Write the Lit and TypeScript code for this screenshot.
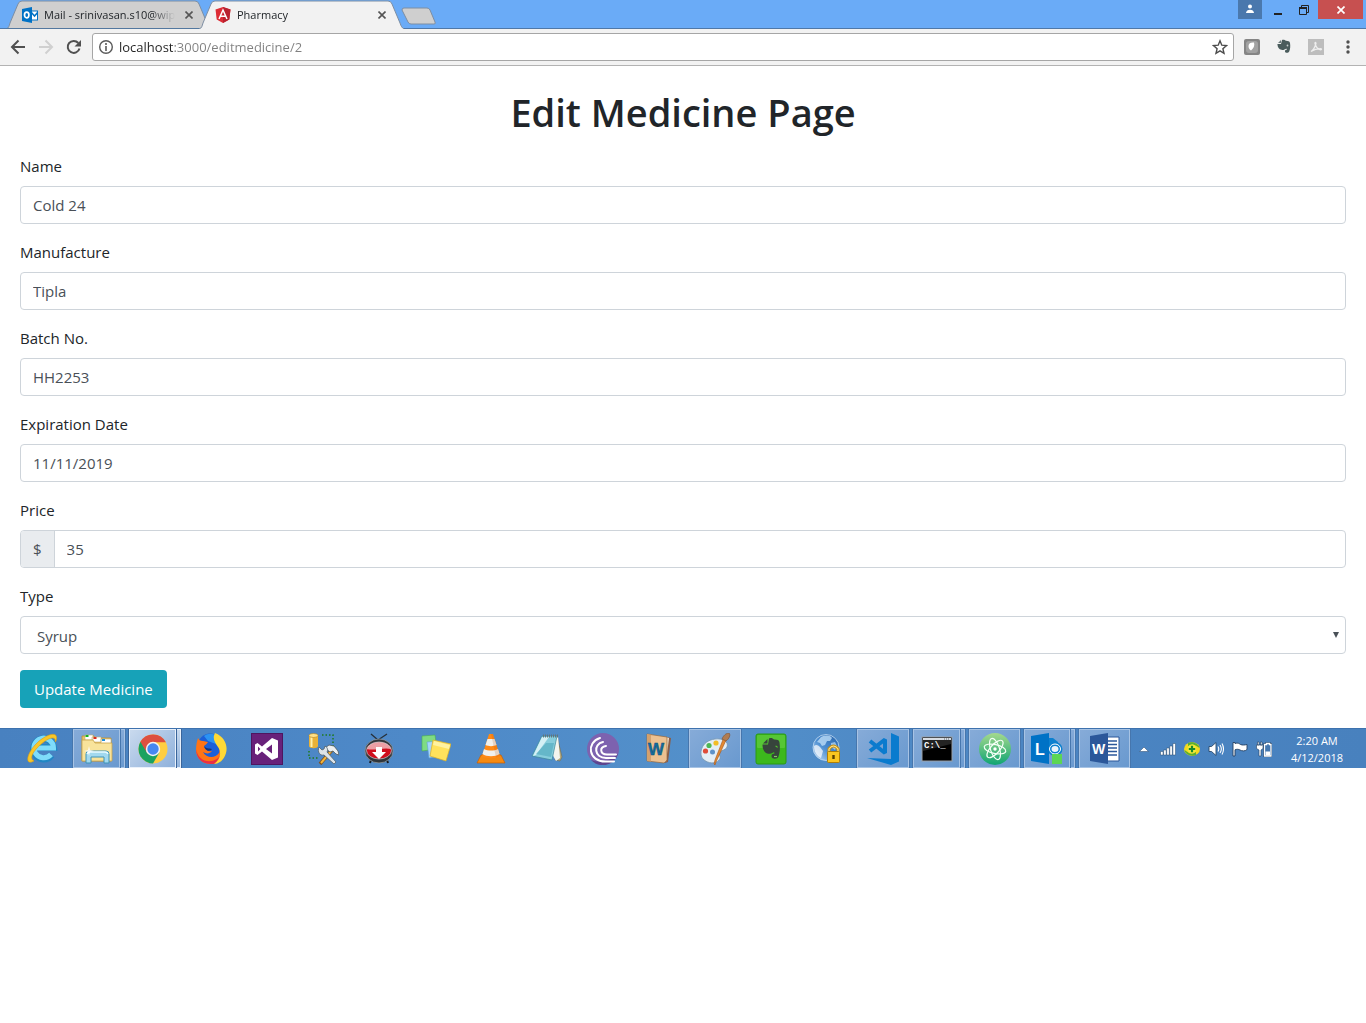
import { LitElement, html, svg, css, nothing } from "lit";
import type { SVGTemplateResult } from "lit";
import { customElement, property, state } from "lit/decorators.js";
import { classMap } from "lit/directives/class-map.js";

/* ---------- Shared styles ---------- */

const base = css`
  :host,
  *,
  *::before,
  *::after {
    box-sizing: border-box;
  }
  button {
    font: inherit;
    color: inherit;
    margin: 0;
    padding: 0;
    border: 0;
    background: none;
  }
  svg {
    display: block;
    flex: none;
  }
`;

const icon = (size: number, art: SVGTemplateResult) =>
  html`<svg width=${size} height=${size} viewBox="0 0 ${size} ${size}" aria-hidden="true">${art}</svg>`;

/* ---------- Browser artwork, 16 x 16 ---------- */

const outlook = svg`
  <rect x="9" y="4" width="6.500" height="9" fill="#fff" stroke="#0072c6"/>
  <path d="M9 5l3.500 4L16 5" fill="none" stroke="#0072c6" stroke-width="1.500"/>
  <path d="M0 2l10-2v16L0 14z" fill="#0072c6"/>
  <ellipse cx="4.700" cy="8" rx="2.200" ry="2.800" fill="none" stroke="#fff" stroke-width="1.700"/>`;

const angular = svg`
  <path d="M8 0l7.500 2.600-1.200 9.900L8 16l-6.300-3.500L.5 2.600z" fill="#dd2c35"/>
  <path d="M8 0l7.500 2.600-1.200 9.900L8 16z" fill="#b9222f"/>
  <path d="M4 12L8 3l4 9M5.500 9.300h5" fill="none" stroke="#fff" stroke-width="1.500"/>`;

const back = svg`<path d="M15 8H2.500M8.500 1.500L2 8l6.500 6.500" fill="none" stroke="#505050" stroke-width="2"/>`;
const forward = svg`<path d="M1 8h12.500M7.500 1.500L14 8l-6.500 6.500" fill="none" stroke="#d0d0d0" stroke-width="2"/>`;
const reload = svg`
  <path d="M13.500 9.500A6 6 0 1 1 12.300 4" fill="none" stroke="#505050" stroke-width="2"/>
  <path d="M15 1v6.500H8.500z" fill="#505050"/>`;
const info = svg`
  <circle cx="8" cy="8" r="6.300" fill="none" stroke="#5a5a5a" stroke-width="1.400"/>
  <path d="M8 7v5M8 4v2" stroke="#5a5a5a" stroke-width="1.600"/>`;
const star = svg`<path d="M8 1.800l1.800 4.400 4.700.4-3.600 3.100 1.100 4.600L8 11.900l-4 2.400 1.100-4.600-3.600-3.100 4.700-.4z" fill="none" stroke="#4c4c4c" stroke-width="1.400"/>`;
const shieldExtension = svg`
  <rect width="16" height="16" rx="2" fill="#858585"/>
  <rect x="2" y="2" width="12" height="12" rx="3" fill="#a2a2a2"/>
  <path d="M4.500 7c0-3 3-4 5.500-3.500C11 6.500 9.500 9.500 7 11.500 5.500 10.500 4.500 9 4.500 7z" fill="#fff"/>`;
const elephantExtension = svg`
  <path d="M6 1c2-.5 3 .4 4 .8 2 .2 3.700.3 4 2.200.5 3 .3 6-.8 8.500-.6 1.600-3.700 1.800-4.200.2-.2-1.200.5-2 1.600-1.900.6-.6.200-1.300-.6-1.100-1.500.6-2.500 1.800-4.500 1.100C3 10.500 1.500 8 1.400 5H5z" fill="#4a5c5c"/>
  <path d="M5 1v3H2z" fill="#6c7c7c"/>
  <circle cx="11.500" cy="6.500" r=".9" fill="#c5cccc"/>`;
const pdfExtension = svg`
  <rect width="16" height="16" fill="#bdbdbd"/>
  <path d="M3 12.500c2-1 4-4.500 5-8 .2-1.400-1.400-1.400-1 0 .8 3.400 3 5.700 5.700 6.300 1.200 0 1-1.200-.2-1.200-3 0-6.700 1-9.500 2.900z" fill="none" stroke="#eee" stroke-width="1.200"/>`;
const dots = svg`<circle cx="8" cy="3" r="1.700" fill="#505050"/><circle cx="8" cy="8" r="1.700" fill="#505050"/><circle cx="8" cy="13" r="1.700" fill="#505050"/>`;

/* ---------- Task bar artwork, 32 x 32 ---------- */

const explorerE = svg`
  <path d="M24.500 22a10 10 0 1 1 2-7.500H9" fill="none" stroke="#2287c4" stroke-width="7"/>
  <path d="M24 21.500a9.800 9.800 0 1 1 2.500-6.500H9" fill="none" stroke="#7fdcfa" stroke-width="5"/>
  <path d="M7 28C-2 33-1 22 8 12S31-3 29.500 6c-.2 1.400-.6 2.200-1.200 3 .6-6-5.300-5-12.800 1S1 25 7 28z" fill="#f9c728" stroke="#d89d18" stroke-width=".6"/>`;

const folder = svg`
  <path d="M1 3h12l1 2h16v23H1z" fill="#e8c469" stroke="#b98f36" stroke-width=".8"/>
  <path d="M4 2h8v5H4zM11 4h9v5h-9zM20 6h10v5H20z" fill="#fff" stroke="#c8b06c" stroke-width=".6"/>
  <path d="M4.500 2h3v2h-3z" fill="#16b31c"/><path d="M12.500 4h3v2h-3z" fill="#d92b1c"/><path d="M21 6h3v2h-3z" fill="#1b8fe0"/>
  <path d="M1 7h11l2 3h17v18H1z" fill="#f8e39b" stroke="#c8a34c" stroke-width=".8"/>
  <path d="M5 30V21q0-3 3-3h17q3 0 3 3v9h-5v-6H10v6z" fill="#a2d9ef" stroke="#3f94b8"/>
  <path d="M6 21q1-2 3-2h15q2 0 3 2" fill="none" stroke="#e9fbff" stroke-width="1.500"/>
  <path d="M8 13l1 4 4 1-4 1-1 4-1-4-4-1 4-1z" fill="#fff" opacity=".8"/>`;

const chrome = svg`
  <circle cx="16" cy="16" r="14.500" fill="#ffce42"/>
  <path d="M16 16L3.400 8.800A14.500 14.500 0 0 0 16 30.500l6.300-10.900z" fill="#1aa260"/>
  <path d="M16 9.300h12.900A14.500 14.500 0 0 0 3.400 8.800l6.400 10.800z" fill="#dd4f40"/>
  <circle cx="16" cy="16" r="7.200" fill="#f3f3f3"/><circle cx="16" cy="16" r="5.700" fill="#4688f1"/>`;

const firefox = svg`
  <circle cx="15" cy="12.500" r="12" fill="#1b5fd8"/>
  <path d="M9 3c4-3 10-3 13 1l-1 7-8-3z" fill="#2b93f2"/>
  <path d="M3 5c1 2 2 3 5 3 2 0 3 1 5 1-1 2-3 3-4 4 1 4 4 6 8 5-2 3-6 3-9 1 3 6 12 7 16 1 2-4 0-8-1-11 5 2 8 8 7 12-2 7-8 10-14 10C7 31 1 25 1 17 1 12 2 8 3 5z" fill="#ff7415"/>
  <path d="M1.200 16c1 9 8 13 15 12 5-.5 9-4 11-9l3 1c-2 8-8 11-14 11C7 31 1 25 1.200 16z" fill="#ea2f45"/>
  <path d="M20 0c10 4 13 13 11 20-2 7-7 11-12 11 6-4 8-11 4-17-3-5-6-8-3-14z" fill="#ffd936"/>
  <path d="M9 13c2 3 5 2 8 3-2 3-7 2-8-3z" fill="#12347b"/>`;

const visualStudio = svg`
  <rect width="32" height="32" fill="#68217a"/><rect x=".5" y=".5" width="31" height="31" fill="none" stroke="#4e1560"/>
  <path fill-rule="evenodd" d="M21 5l6 2.500v17L21 27l-10-8.500L6.500 22 4 20.500v-9L6.500 10l4.500 3.500zM21 11.500L15 16l6 4.500zM7 13.500v5L9.300 16z" fill="#fff"/>`;

const databaseTools = svg`
  <path d="M2 2v11c0 3 9 3 9 0V2z" fill="#e9b238"/><path d="M3.500 3v11h2V3z" fill="#fff1ac"/><ellipse cx="6.500" cy="2.500" rx="4.500" ry="2" fill="#ffe188" stroke="#b27e18" stroke-width=".6"/>
  <path d="M15 2h11v11M2 18v7h10" fill="none" stroke="#1f7a1c" stroke-width="1.500" stroke-dasharray="1.500 2"/>
  <path d="M25 17L13 31" stroke="#845018" stroke-width="3.500"/><path d="M25 17L14 30" stroke="#f4b63c" stroke-width="2"/>
  <path d="M18 15l4-3 5 1 4 5 1 4-3-1-3-3-3 1z" fill="#eceff1" stroke="#4d5960" stroke-width=".8"/>
  <path d="M12 14l3 3 2-1 1-3c3 2 3 4 2 6l9 10-2 2-10-9c-4 1-7-3-5-8z" fill="#dce3e8" stroke="#52616b" stroke-width=".8"/>`;

const downloader = svg`
  <path d="M8 1l7 6 9-6" fill="none" stroke="#273039" stroke-width="1.300"/>
  <path d="M8 27l-1 3M24 27l1 3" stroke="#15191d" stroke-width="2"/>
  <ellipse cx="16" cy="18" rx="14" ry="12" fill="#30363b" stroke="#8e979d" stroke-width=".8"/>
  <ellipse cx="16" cy="17.500" rx="12.500" ry="8.500" fill="#cf0f1d" stroke="#b9bec2" stroke-width=".8"/>
  <path d="M4 16c2-9 22-9 24 0-7-2-17 2-24 0z" fill="#fff" opacity=".6"/>
  <path d="M13 14h6v5h4l-7 7-7-7h4z" fill="#fff"/>`;

const stickyNotes = svg`
  <path d="M3 3l13-1 2 14-15 2z" fill="#7edb83" stroke="#4aae50" stroke-width=".6"/>
  <path d="M8 9l13-1 1 15-12 2z" fill="#a4d6fb" stroke="#5ea1d6" stroke-width=".6"/>
  <path d="M14 7l18 4-5 17-16-5z" fill="#ffe25c" stroke="#d9ad28" stroke-width=".7"/>
  <path d="M15 8l16 4-1 4-16-4z" fill="#fff2a0"/>`;

const vlc = svg`
  <path d="M6 22h20l4 8H2z" fill="#f58a12" stroke="#c75b00" stroke-width=".7"/>
  <path d="M14 1h4l7 22c-3 3-15 3-18 0z" fill="#ff8a17"/>
  <path d="M12.500 6h7l2 6c-3 1.500-8 1.500-11 0zM9 16c4 2 10 2 14 0l1.500 5c-4 3-13 3-17 0z" fill="#f0f0ed"/>
  <path d="M16 1h2l7 22-4 1.500z" fill="#b94c00" opacity=".18"/>`;

const notepad = svg`
  <path d="M26 3l5 21-2 4-5-1z" fill="#b6aa7d" stroke="#6c6a56" stroke-width=".6"/>
  <path d="M11 3h16l2 22-4 3z" fill="#f4f5ee"/>
  <path d="M11 3h15l-5 24-20-4z" fill="#87cddc" stroke="#3b8798" stroke-width=".7"/>
  <path d="M11 4h7L5 22l-3 1z" fill="#d4f0f5"/><path d="M15 10h8l-3 14-15-3z" fill="#4ea9bc" opacity=".6"/>
  <path d="M12 3h15" stroke="#65747b" stroke-width="3" stroke-dasharray="1 1"/>`;

const torrent = svg`
  <circle cx="16" cy="16" r="16" fill="#7d62af"/><path d="M4 27a16 16 0 0 0 27-6C22 29 12 30 4 27z" fill="#5e448e"/>
  <g fill="none" stroke="#fff" stroke-width="2" stroke-linecap="round">
    <path d="M13 5C-1 9 1 29 19 28.500h8"/><path d="M16 9C6 11 7 25 19 25h9"/><path d="M19 13c-7 1-6 8.500 1 8.500h9"/>
  </g>`;

const wordWeb = svg`
  <path d="M24 4l4 1-3 24-3 1z" fill="#8b5e48"/><path d="M23 4l3 1-3 24-2-1z" fill="#f4e5cc"/>
  <path d="M4 1l20 3v23l-3 3-17-2z" fill="#ecc191" stroke="#95673c" stroke-width=".7"/><path d="M4 1l4 .7V28.500L4 28z" fill="#d4a16d"/>
  <text x="5" y="22" font-family="Liberation Sans, sans-serif" font-size="17" font-weight="700" fill="#146d9e" stroke="#0c5077" stroke-width=".5">W</text>`;

const paint = svg`
  <path d="M16 6c8-1 14 3 12 8-1 3-5 3-7 5-2 3 2 5-1 8-3 4-11 4-16-1C0 22 1 8 16 6z" fill="#e4eef6" stroke="#7595b0" stroke-width=".8"/>
  <circle cx="6.500" cy="18" r="2.600" fill="#df4c39"/><circle cx="10" cy="12.500" r="2.600" fill="#4db653"/><circle cx="17" cy="10" r="2.600" fill="#f2bd28"/><circle cx="13.500" cy="19" r="2.500" fill="#5f92c8"/>
  <path d="M28 5L17 29l-1 3-1-1 1-4L25 4z" fill="#e38932" stroke="#a45519" stroke-width=".6"/>
  <path d="M23 6c1-3 4-6 7-6 2 2 0 6-3 8z" fill="#b07c52" stroke="#7a5034" stroke-width=".6"/>`;

const evernote = svg`
  <rect x="1" y="1" width="30" height="30" rx="2" fill="#3cb81d" stroke="#2a9a14"/><rect x="2" y="2" width="28" height="13" rx="1" fill="#64ce42" opacity=".65"/>
  <path d="M14 5.500c2-1 4 0 5 1 3 .2 5 0 5.500 3 .8 5 .4 10-1 14-1 3-6.500 3-7 0-.2-2 1-3 2.600-2.700.8-.8.300-1.800-.8-1.400-2 .6-3.500 2-6 1.200C8.500 19 7.500 15 7.500 11.500H13z" fill="#37443c"/>
  <path d="M12.500 6v4.500H8z" fill="#37443c"/><path d="M20 13c2-1 3 .3 2.500 2z" fill="#50c72c"/><path d="M19 23.500h3" stroke="#7dd05e" stroke-width="1.200"/>`;

const globeLock = svg`
  <defs><linearGradient id="globeBlue" x1="1" y1="0" x2="0" y2="1"><stop stop-color="#2460a8"/><stop offset=".55" stop-color="#4f90d2"/><stop offset="1" stop-color="#cfe4f7"/></linearGradient></defs>
  <circle cx="15" cy="14.500" r="13" fill="url(#globeBlue)" stroke="#c4dcf2" stroke-width=".8"/>
  <path d="M10 4c4-2 9-2 11 1l-2 3h-3l-2 4-3 1-2-3-3-1z" fill="#bcdcf6" opacity=".8"/>
  <path d="M20 10l4-1 2 4-2 4-4-3z" fill="#bcdcf6" opacity=".7"/>
  <path d="M3 13c2-2 4-1 6 1l3 4-2 7c-4-2-7-6-7-12z" fill="#fff" opacity=".7"/>
  <path d="M18 20v-4q4.500-6 9 0v4" fill="none" stroke="#c58e10" stroke-width="3"/><path d="M18 20v-4q4.500-6 9 0v4" fill="none" stroke="#ffe48a" stroke-width="1.200"/>
  <rect x="16.500" y="18.500" width="12" height="11" rx="1" fill="#f9c520" stroke="#ae7e06"/><path d="M22.500 22v4" stroke="#5a4000" stroke-width="2.400"/>`;

const vsCode = svg`
  <path d="M24 0l8 3.500v25L24 32 0 25l24 1z" fill="#0a7bce"/>
  <path d="M3 8l15 12V6.500L3 18" fill="none" stroke="#0a7bce" stroke-width="4" stroke-linejoin="bevel"/>`;

const terminal = svg`
  <rect x="1" y="4" width="30" height="24" fill="#000" stroke="#9a9fa5"/><path d="M2 5h28v2H2z" fill="#d7dce2"/>
  <path d="M23 6h6" stroke="#59636d" stroke-dasharray="1 1"/><path d="M2 18l28-7v-4H2z" fill="#323232" opacity=".7"/>
  <text x="3" y="15" font-family="Liberation Mono, monospace" font-size="9" font-weight="700" fill="#fff">C:\\_</text>`;

const atom = svg`
  <defs><linearGradient id="atomGreen" x2="0" y2="1"><stop stop-color="#a5d98d"/><stop offset="1" stop-color="#0fa573"/></linearGradient></defs>
  <circle cx="16" cy="16" r="16" fill="url(#atomGreen)"/>
  <g fill="none" stroke="#f4fff6" stroke-width="1.200"><ellipse cx="16" cy="16" rx="4.500" ry="11" transform="rotate(-18 16 16)"/><ellipse cx="16" cy="16" rx="4.500" ry="11" transform="rotate(42 16 16)"/><ellipse cx="16" cy="16" rx="4.500" ry="11" transform="rotate(102 16 16)"/></g>
  <circle cx="16" cy="16" r="1.700" fill="#fff"/>`;

const lync = svg`
  <path d="M18 5h4l5 4v4h-9z" fill="#0c80cf"/>
  <ellipse cx="24" cy="16" rx="5.500" ry="5" fill="#e8f3fb" stroke="#0c80cf" stroke-width="4"/>
  <ellipse cx="24" cy="16" rx="5.500" ry="5" fill="none" stroke="#fff" stroke-width="1"/>
  <path d="M0 3l18-3v31L0 28z" fill="#0072c6"/>
  <text x="4" y="22" font-family="Liberation Sans, sans-serif" font-size="16" font-weight="700" fill="#fff">L</text>
  <path d="M21 21h10v10H21z" fill="#5cd653"/>`;

const word = svg`
  <path d="M17 4h13v24H17z" fill="#fff" stroke="#2b579a"/><path d="M19 8h9M19 11.500h9M19 15h9M19 18.500h9M19 22h9" stroke="#2b579a" stroke-width="1.500"/>
  <path d="M1 3l18-3v31L1 28z" fill="#2b579a"/>
  <text x="3" y="21" font-family="Liberation Sans, sans-serif" font-size="14" font-weight="700" fill="#fff">W</text>`;

/* ---------- Tray artwork, 16 x 16 ---------- */

const chevron = svg`<path d="M3.500 10.500h9L8 6z" fill="#fff" stroke="#35577c" stroke-width=".6"/>`;
const signal = svg`<g fill="#fff" stroke="#24496f" stroke-width=".5"><path d="M.5 10.500h2.600V14H.5zM3.600 9h2.600v5H3.600zM6.700 7h2.600v7H6.700zM9.800 5h2.600v9H9.800zM12.900 2.500h2.600V14h-2.600z"/></g>`;
const sync = svg`
  <ellipse cx="8" cy="8" rx="8" ry="6.800" fill="#f4d91c"/><path d="M4 2c5-2 11 1 11.500 5l-3-2C10 3 7 3 4 5zM12 14C7 16 1 13 .5 9l3 2c2.500 2 5.500 2 8.500 0z" fill="#5cb030"/>
  <circle cx="8" cy="8" r="4.400" fill="#f2ea3c"/><path d="M8 4.800v6.400M4.800 8h6.400" stroke="#178b28" stroke-width="2.200"/>`;
const sound = svg`
  <path d="M1 5.500h2.500L8 1.500v13L3.500 10.500H1z" fill="#fff" stroke="#29496b" stroke-width=".9"/>
  <path d="M10 5.500q1.500 2.500 0 5M12 4q2.700 4 0 8M14 2.500q3 5.500 0 11" fill="none" stroke="#fff" stroke-width="1.100"/>`;
const flag = svg`<path d="M1 1.500h2v1c3-1 4 0 5.500 1 2 .8 4 .6 6.500 0v5c-2 2-5 1.500-7 .5-1.500-.8-3-1-5-.2V15H1z" fill="#fff" stroke="#244061" stroke-width=".9"/>`;
const battery = svg`
  <path d="M8.500 3.500h2v-1h3v1h1.500v11.500H8.500z" fill="#4578b0" stroke="#244061" stroke-width="2.400"/>
  <path d="M8.500 3.500h2v-1h3v1h1.500v11.500H8.500z" fill="#4578b0" stroke="#fff" stroke-width="1.300"/><path d="M9.500 10.500h4.500v4H9.500z" fill="#fff"/>
  <path d="M.5 4h6.500v3.500L5 9v6H3V9L.5 7.500zM1.500 1H3v3H1.500zM4.500 1H6v3H4.500z" fill="#fff" stroke="#244061" stroke-width=".6"/>`;

/* ---------- Browser window ---------- */

@customElement("browser-tab")
export class BrowserTab extends LitElement {
  @property() label = "";
  @property({ type: Boolean, reflect: true }) active = false;
  @property({ attribute: false }) art: SVGTemplateResult | typeof nothing = nothing;

  static styles = [
    base,
    css`
      :host {
        display: grid;
        flex: 0 1 205px;
        min-width: 0;
        height: 29px;
      }
      :host([active]) {
        z-index: 1;
      }
      .shape,
      .content {
        grid-area: 1 / 1;
      }
      .shape {
        width: 100%;
        height: 29px;
      }
      .content {
        display: flex;
        align-items: center;
        gap: 6px;
        min-width: 0;
        padding: 1px 14px 0 16px;
        z-index: 1;
      }
      .title {
        flex: 1;
        min-width: 0;
        white-space: nowrap;
        text-align: left;
        font-size: 11px;
        line-height: 20px;
        mask-image: linear-gradient(to right, #000 calc(100% - 24px), transparent);
      }
      .close {
        display: grid;
        place-items: center;
        width: 16px;
        height: 16px;
      }
    `,
  ];

  render() {
    const fill = this.active ? "#f2f2f2" : "#cfcfcf";
    return html`
      <svg class="shape" viewBox="0 0 205 29" preserveAspectRatio="none" aria-hidden="true">
        <path
          d="M0 29C3 28 3 26 4 23L12 4Q13 1 16 1H189Q192 1 193 4L201 23C202 26 203 28 205 29"
          fill=${fill}
          stroke="#7d8ea3"
        />
        ${this.active ? nothing : svg`<path d="M0 28.500H205" stroke="#53789f"/>`}
      </svg>
      <div class="content">
        ${icon(16, svg`${this.art}`)}
        <button class="title" role="tab" aria-selected=${this.active}>${this.label}</button>
        <button class="close" aria-label="Close ${this.label}">
          ${icon(8, svg`<path d="M.5.5l7 7M7.500.5l-7 7" stroke="#555" stroke-width="1.600"/>`)}
        </button>
      </div>
    `;
  }
}

@customElement("browser-chrome")
export class BrowserChrome extends LitElement {
  static styles = [
    base,
    css`
      :host {
        display: block;
      }
      .strip {
        display: flex;
        height: 29px;
        background: linear-gradient(#6aabf7 28px, #4f78a8 28px);
      }
      .tabs {
        display: flex;
        flex: 1;
        min-width: 0;
        padding-left: 6px;
      }
      .tabs browser-tab + browser-tab {
        margin-left: -12px;
      }
      .new-tab {
        align-self: center;
        margin-top: 2px;
        margin-left: -3px;
      }
      .window {
        display: flex;
        padding-right: 3px;
      }
      .window button {
        display: grid;
        place-items: center;
        width: 28px;
        height: 19px;
      }
      .window .user {
        width: 24px;
        background: #4a78ad;
      }
      .window .close {
        width: 45px;
        background: #c75050;
      }
      .toolbar {
        display: flex;
        align-items: center;
        height: 37px;
        padding: 0 2px 0 4px;
        background: #f2f2f2;
        border-bottom: 1px solid #b3b3b3;
      }
      .nav,
      .extension {
        display: grid;
        place-items: center;
        width: 28px;
        height: 28px;
      }
      .extension {
        width: 32px;
      }
      .address {
        display: flex;
        flex: 1;
        align-items: center;
        gap: 5px;
        height: 28px;
        min-width: 0;
        margin: 0 2px 0 4px;
        padding: 0 5px;
        background: #fff;
        border: 1px solid #a6a6a6;
        border-radius: 3px;
      }
      .url {
        flex: 1;
        min-width: 0;
        padding: 0;
        border: 0;
        outline: 0;
        font: inherit;
        font-size: 13px;
        line-height: 20px;
        color: transparent;
        background: linear-gradient(to right, #222 55px, #808080 55px);
        background-clip: text;
        -webkit-background-clip: text;
      }
    `,
  ];

  render() {
    return html`
      <div class="strip">
        <div class="tabs" role="tablist">
          <browser-tab label="Mail - srinivasan.s10@wip" .art=${outlook}></browser-tab>
          <browser-tab label="Pharmacy" .art=${angular} active></browser-tab>
          <button class="new-tab" aria-label="New tab">
            <svg width="36" height="18" viewBox="0 0 36 18" aria-hidden="true">
              <path d="M3 1H26Q28 1 29 3L34 15Q35 17 33 17H10Q8 17 7 15L1 3Q1 1 3 1z" fill="#cfcfcf" stroke="#7d8ea3" />
            </svg>
          </button>
        </div>
        <div class="window">
          <button class="user" aria-label="Profile">
            ${icon(16, svg`<circle cx="8" cy="4.500" r="2" fill="#fff"/><path d="M4 11c0-4.500 8-4.500 8 0z" fill="#fff"/>`)}
          </button>
          <button aria-label="Minimize">${icon(16, svg`<path d="M6 11h8v2H6z" fill="#222"/>`)}</button>
          <button aria-label="Restore">
            ${icon(16, svg`<path d="M3.500 5.500h7v7h-7zM5.500 5V3.500h7v7H11" fill="none" stroke="#222"/><path d="M3 5h8v2H3z" fill="#222"/>`)}
          </button>
          <button class="close" aria-label="Close">
            ${icon(8, svg`<path d="M.5.5l7 7M7.500.5l-7 7" stroke="#fff" stroke-width="1.700"/>`)}
          </button>
        </div>
      </div>
      <div class="toolbar">
        <button class="nav" aria-label="Back">${icon(16, back)}</button>
        <button class="nav" aria-label="Forward" disabled>${icon(16, forward)}</button>
        <button class="nav" aria-label="Reload">${icon(16, reload)}</button>
        <div class="address">
          ${icon(16, info)}
          <input class="url" aria-label="Address" value="localhost:3000/editmedicine/2" spellcheck="false" />
          <button aria-label="Bookmark">${icon(16, star)}</button>
        </div>
        <button class="extension" aria-label="Shield">${icon(16, shieldExtension)}</button>
        <button class="extension" aria-label="Clipper">${icon(16, elephantExtension)}</button>
        <button class="extension" aria-label="PDF">${icon(16, pdfExtension)}</button>
        <button class="extension" aria-label="Menu">${icon(16, dots)}</button>
      </div>
    `;
  }
}

/* ---------- Edit form ---------- */

interface Field {
  id: string;
  label: string;
  value: string;
  prefix?: string;
}

@customElement("medicine-form")
export class MedicineForm extends LitElement {
  @state() private fields: Field[] = [
    { id: "name", label: "Name", value: "Cold 24" },
    { id: "manufacture", label: "Manufacture", value: "Tipla" },
    { id: "batch", label: "Batch No.", value: "HH2253" },
    { id: "expiration", label: "Expiration Date", value: "11/11/2019" },
    { id: "price", label: "Price", value: "35", prefix: "$" },
  ];

  static styles = [
    base,
    css`
      :host {
        display: block;
        padding: 20px;
        font-size: 15px;
        line-height: 24px;
        color: #212529;
      }
      h1 {
        margin: 0 0 16px;
        font-size: 38px;
        font-weight: 600;
        line-height: 52px;
        text-align: center;
      }
      form {
        display: grid;
        gap: 16px;
      }
      .group {
        display: grid;
        gap: 8px;
      }
      .control {
        display: flex;
        height: 38px;
        overflow: hidden;
        background: #fff;
        border: 1px solid #ced4da;
        border-radius: 4px;
      }
      .control:focus-within {
        border-color: #80bdff;
      }
      .prefix {
        padding: 6px 12px;
        color: #495057;
        background: #e9ecef;
        border-right: 1px solid #ced4da;
      }
      input,
      select {
        flex: 1;
        min-width: 0;
        margin: 0;
        padding: 0 12px;
        border: 0;
        outline: 0;
        font: inherit;
        color: #495057;
        background: none;
      }
      select {
        padding: 2px 16px 0;
        appearance: none;
      }
      .arrow {
        align-self: center;
        margin-right: 6px;
      }
      .submit {
        justify-self: start;
        height: 38px;
        padding: 0 14px;
        color: #fff;
        background: #17a2b8;
        border-radius: 4px;
      }
    `,
  ];

  render() {
    return html`
      <h1>Edit Medicine Page</h1>
      <form @submit=${(e: Event) => e.preventDefault()}>
        ${this.fields.map(
          (f) => html`
            <div class="group">
              <label for=${f.id}>${f.label}</label>
              <div class="control">
                ${f.prefix ? html`<span class="prefix">${f.prefix}</span>` : nothing}
                <input id=${f.id} type="text" .value=${f.value} />
              </div>
            </div>
          `,
        )}
        <div class="group">
          <label for="type">Type</label>
          <div class="control">
            <select id="type">
              <option selected>Syrup</option>
            </select>
            <svg class="arrow" width="6" height="6" viewBox="0 0 6 6" aria-hidden="true"><path d="M0 0h6L3 6z" fill="#495057" /></svg>
          </div>
        </div>
        <button class="submit">Update Medicine</button>
      </form>
    `;
  }
}

/* ---------- Task bar ---------- */

interface App {
  name: string;
  art: SVGTemplateResult;
  state?: "open" | "stacked" | "current";
}

const apps: App[] = [
  { name: "Internet Explorer", art: explorerE },
  { name: "File Explorer", art: folder, state: "stacked" },
  { name: "Chrome", art: chrome, state: "current" },
  { name: "Firefox", art: firefox },
  { name: "Visual Studio", art: visualStudio },
  { name: "Database Tools", art: databaseTools },
  { name: "Video Downloader", art: downloader },
  { name: "Sticky Notes", art: stickyNotes },
  { name: "VLC", art: vlc },
  { name: "Notepad", art: notepad },
  { name: "BitTorrent", art: torrent },
  { name: "WordWeb", art: wordWeb },
  { name: "Paint", art: paint, state: "open" },
  { name: "Evernote", art: evernote },
  { name: "Secure Browser", art: globeLock },
  { name: "Visual Studio Code", art: vsCode, state: "open" },
  { name: "Command Prompt", art: terminal, state: "stacked" },
  { name: "Atom", art: atom, state: "open" },
  { name: "Lync", art: lync, state: "stacked" },
  { name: "Word", art: word, state: "open" },
];

const tray: [string, SVGTemplateResult][] = [
  ["Show hidden icons", chevron],
  ["Network", signal],
  ["Sync", sync],
  ["Volume", sound],
  ["Action Center", flag],
  ["Battery", battery],
];

@customElement("task-bar")
export class TaskBar extends LitElement {
  static styles = [
    base,
    css`
      :host {
        display: flex;
        justify-content: space-between;
        height: 40px;
        overflow: hidden;
        padding: 0 10px 0 15px;
        background: linear-gradient(to right, #4881c0, #4e89c8 30%, #5390ca 52%, #4b85c3 75%, #4881be);
        border-top: 1px solid #3e72ae;
      }
      .apps,
      .tray {
        display: flex;
      }
      .app {
        display: flex;
        width: 56px;
        padding: 0 2px;
      }
      .app:nth-last-child(-n + 3) {
        width: 55px;
      }
      .face {
        display: grid;
        flex: 1;
        place-items: center;
        border: 1px solid transparent;
      }
      .open .face,
      .stacked .face,
      .edge {
        background: linear-gradient(135deg, #86abd8, #6999cf);
        border: 1px solid #a7c3e4;
        outline: 1px solid #4676ad;
      }
      .edge {
        width: 4px;
        border-left: 0;
        margin-left: 1px;
      }
      .current .face,
      .current .edge {
        background: linear-gradient(135deg, #c9daee, #8fb1db);
        border-color: #e8f0fa;
        outline: 1px solid #3a659b;
      }
      .tray {
        color: #fff;
      }
      .tray button {
        display: grid;
        place-items: center;
        width: 24px;
      }
      .tray .clock {
        width: 82px;
        font-size: 11px;
        line-height: 17px;
        align-content: center;
      }
    `,
  ];

  render() {
    return html`
      <div class="apps">
        ${apps.map((a) => {
          const doubled = a.state === "stacked" || a.state === "current";
          return html`
            <button
              class=${classMap({
                app: true,
                open: a.state === "open",
                stacked: doubled,
                current: a.state === "current",
              })}
              aria-label=${a.name}
            >
              <span class="face">${icon(32, a.art)}</span>
              ${doubled ? html`<span class="edge"></span>` : nothing}
            </button>
          `;
        })}
      </div>
      <div class="tray">
        ${tray.map(([name, art]) => html`<button aria-label=${name}>${icon(16, art)}</button>`)}
        <button class="clock"><span>2:20 AM</span><span>4/12/2018</span></button>
      </div>
    `;
  }
}

@customElement("app-root")
export class AppRoot extends LitElement {
  static styles = css`
    :host {
      display: block;
      min-height: 100vh;
      background: #fff;
      color: #212529;
      font-family: "Open Sans", "Noto Sans", sans-serif;
    }
  `;

  render() {
    return html`
      <browser-chrome></browser-chrome>
      <medicine-form></medicine-form>
      <task-bar></task-bar>
    `;
  }
}
